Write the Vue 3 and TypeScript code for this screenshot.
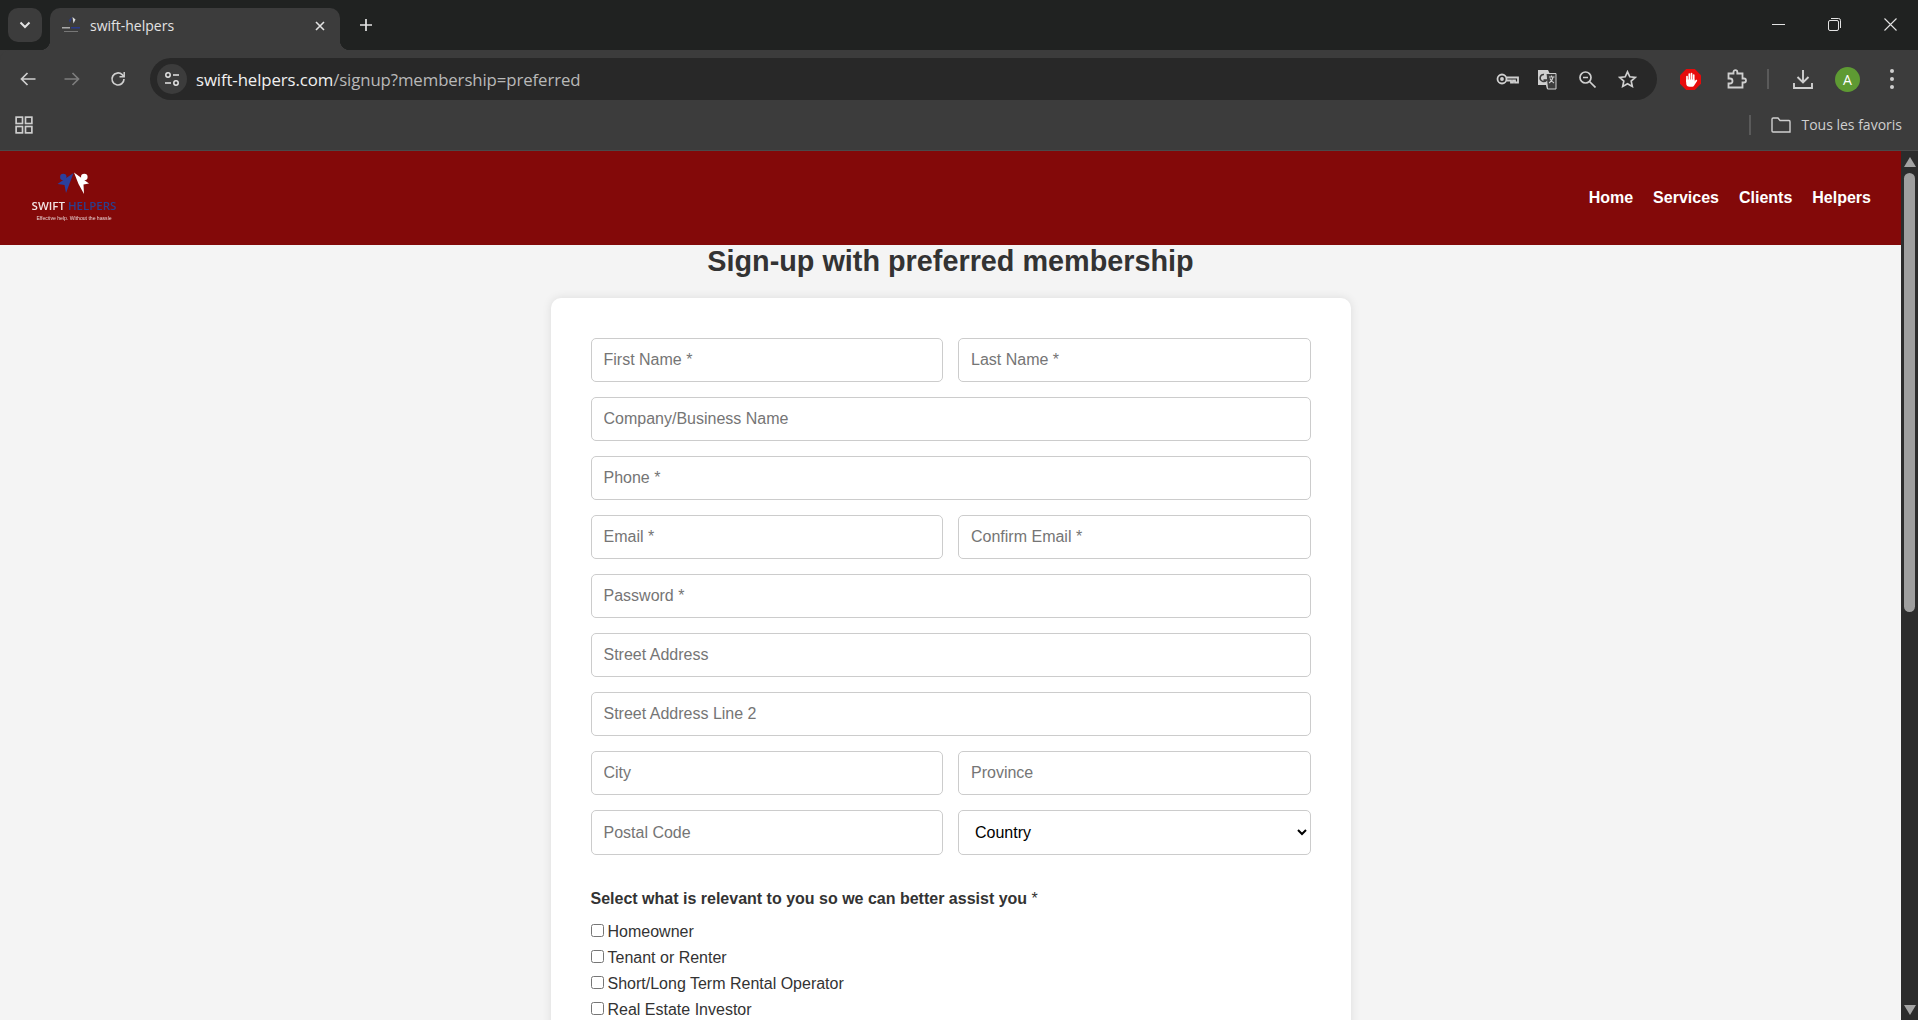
<script setup lang="ts">
type Field = { placeholder: string };

const rows: Field[][] = [
  [{ placeholder: 'First Name *' }, { placeholder: 'Last Name *' }],
  [{ placeholder: 'Company/Business Name' }],
  [{ placeholder: 'Phone *' }],
  [{ placeholder: 'Email *' }, { placeholder: 'Confirm Email *' }],
  [{ placeholder: 'Password *' }],
  [{ placeholder: 'Street Address' }],
  [{ placeholder: 'Street Address Line 2' }],
  [{ placeholder: 'City' }, { placeholder: 'Province' }],
];

const navLinks = ['Home', 'Services', 'Clients', 'Helpers'];

const relevance = [
  'Homeowner',
  'Tenant or Renter',
  'Short/Long Term Rental Operator',
  'Real Estate Investor',
];
</script>

<template>
  <div class="window">
    <!-- browser chrome -->
    <div class="tabstrip">
      <button class="tab-search" aria-label="Tabs">
        <svg width="12" height="8" viewBox="0 0 12 8"><path d="M1.5 1.5 6 6l4.500-4.500" fill="none" stroke="#e3e3e3" stroke-width="2" /></svg>
      </button>
      <div class="tab">
        <svg class="favicon" width="20" height="20" viewBox="0 0 20 20">
          <path d="M11 1 9 7 8 4Z" fill="#2a3a8a" />
          <path d="M11.500 1l3 2.500-2 4Z" fill="#ddd" />
          <rect x="1" y="11" width="8" height="1.500" fill="#aaa" />
          <rect x="10" y="11" width="9" height="1.500" fill="#2a3a8a" />
          <rect x="3" y="15" width="14" height="1" fill="#777" />
        </svg>
        <span class="tab-title">swift-helpers</span>
        <svg class="tab-close" width="10" height="10" viewBox="0 0 10 10"><path d="M1 1l8 8M9 1l-8 8" stroke="#e3e3e3" stroke-width="1.6" /></svg>
      </div>
      <svg class="new-tab" width="14" height="14" viewBox="0 0 14 14"><path d="M7 1v12M1 7h12" stroke="#e3e3e3" stroke-width="1.7" /></svg>
      <div class="window-controls">
        <svg width="13" height="13" viewBox="0 0 13 13"><path d="M0 6.500h13" stroke="#e3e3e3" /></svg>
        <svg width="13" height="13" viewBox="0 0 13 13" fill="none" stroke="#e3e3e3"><rect x=".5" y="2.500" width="10" height="10" rx="1.500" /><path d="M3 .5h7.500a2 2 0 0 1 2 2V10" /></svg>
        <svg width="13" height="13" viewBox="0 0 13 13"><path d="M.5.5l12 12M12.500.5l-12 12" stroke="#e3e3e3" stroke-width="1.100" /></svg>
      </div>
    </div>

    <div class="toolbar">
      <svg class="tb-back" width="16" height="14" viewBox="0 0 16 14" fill="none" stroke="#cfcfcf" stroke-width="1.7"><path d="M15.500 7H1.500M7.500 1l-6 6 6 6" /></svg>
      <svg class="tb-forward" width="16" height="14" viewBox="0 0 16 14" fill="none" stroke="#7d7d7d" stroke-width="1.7"><path d="M.5 7h14M8.500 1l6 6-6 6" /></svg>
      <svg class="tb-reload" width="16" height="16" viewBox="0 0 16 16" fill="none" stroke="#cfcfcf" stroke-width="1.7"><path d="M14 8a6 6 0 1 1-1.800-4.300L14 5.500" /><path d="M14.200 1v4.800H9.500" stroke-width="1.500" /></svg>
      <div class="omnibox">
        <div class="site-info">
          <svg width="16" height="16" viewBox="0 0 16 16" fill="none" stroke="#e3e3e3" stroke-width="1.500"><circle cx="4" cy="4" r="2.200" /><path d="M9 4h6M1 12h6" /><circle cx="12" cy="12" r="2.200" /></svg>
        </div>
        <span class="url"><span class="url-host">swift-helpers.com</span>/signup?membership=preferred</span>
        <div class="omni-icons">
          <svg class="key" width="23" height="12" viewBox="0 0 23 12" fill="none" stroke="#cfcfcf" stroke-width="1.800"><circle cx="6" cy="6" r="4.500" /><circle cx="6" cy="6" r="1" /><path d="M10.500 4.500h11.500v5h-3v-2h-2v2h-2v-2h-4.500" /></svg>
          <svg width="20" height="21" viewBox="0 0 20 21"><path d="M1 1h10l1.500 3H19v16h-9l-1-4H1Z" fill="#cfcfcf" /><path d="M9 4.500h10V20h-8.500Z" fill="#3c3c3c" stroke="#cfcfcf" /><path d="M7 5.500a3.500 3.500 0 1 0 2.500 5.500H6.500" fill="none" stroke="#3c3c3c" stroke-width="1.500" /><path d="M12 8h5.500M14.500 6.500V8M16 8c-.500 3-2 5-4 6M13 9.500c.800 2 2.200 3.500 4 4.500" fill="none" stroke="#cfcfcf" stroke-width="1.100" /></svg>
          <svg width="17" height="17" viewBox="0 0 17 17" fill="none" stroke="#cfcfcf" stroke-width="1.700"><circle cx="6.500" cy="6.500" r="5.500" /><path d="M10.500 10.500l6 6M4 6.500h5" /></svg>
          <svg width="19" height="18" viewBox="0 0 19 18" fill="none" stroke="#cfcfcf" stroke-width="1.700"><path d="M9.500 1.800l2.300 5 5.400.6-4 3.700 1.100 5.300-4.800-2.700-4.800 2.700 1.100-5.300-4-3.700 5.400-.6Z" /></svg>
        </div>
      </div>
      <svg class="tb-stop" width="21" height="21" viewBox="0 0 21 21">
        <path d="M6.200 0h8.600L21 6.200v8.600L14.800 21H6.200L0 14.800V6.200Z" fill="#e60b0b" />
        <path d="M7 7.500v5M9.300 5v6M11.500 4.500V11M13.700 6v6" stroke="#fff" stroke-width="1.700" stroke-linecap="round" />
        <path d="M6.200 10.500h8.300v2l1.200-1.500c.9-.8 1.900.1 1.400.9L14 16.800a2 2 0 0 1-1.700.9H9.700a3.500 3.500 0 0 1-3.500-3.500Z" fill="#fff" />
      </svg>
      <svg class="tb-puzzle" width="20" height="20" viewBox="0 0 20 20" fill="none" stroke="#cfcfcf" stroke-width="1.800"><path d="M1.500 4.500H6.500V3a1.900 1.900 0 0 1 3.800 0v1.500h5.200v5H17a2 2 0 0 1 0 4h-1.500v5H1.500v-4H3a2.400 2.400 0 0 0 0-5H1.500Z" /></svg>
      <span class="tb-sep"></span>
      <svg class="tb-download" width="20" height="20" viewBox="0 0 20 20" fill="none" stroke="#cfcfcf" stroke-width="1.900"><path d="M10 1v12M4.500 8l5.500 5.500L15.500 8M1 14v5h18v-5" /></svg>
      <div class="avatar">A</div>
      <div class="menu-dots"><i></i><i></i><i></i></div>
    </div>

    <div class="bookmarks">
      <svg width="18" height="18" viewBox="0 0 24 24" class="apps" fill="none" stroke="#cfcfcf" stroke-width="2.200"><rect x="1.500" y="1.500" width="8.500" height="8.500" /><rect x="14" y="1.500" width="8.500" height="8.500" /><rect x="1.500" y="14" width="8.500" height="8.500" /><rect x="14" y="14" width="8.500" height="8.500" /></svg>
      <span class="bm-sep"></span>
      <svg class="bm-folder" width="20" height="16" viewBox="0 0 20 16" fill="none" stroke="#cfcfcf" stroke-width="1.400"><path d="M1 14V2.200A1.200 1.200 0 0 1 2.200 1H7l2 2.500h9A1.200 1.200 0 0 1 19 4.700V15H2A1 1 0 0 1 1 14Z" /></svg>
      <span class="bm-label">Tous les favoris</span>
    </div>

    <!-- page -->
    <div class="viewport">
      <div class="page">
        <header class="site-header">
          <div class="logo">
            <svg width="40" height="25" viewBox="0 0 40 25">
              <circle cx="9.300" cy="5" r="3.200" fill="#2b3f9e" />
              <path d="M19.500 1 12 21 10.500 13 3.500 12Z" fill="#2b3f9e" />
              <circle cx="30.300" cy="5" r="3.300" fill="#fff" />
              <path d="M20 .5 35 11.500 29.500 12.500 30 22 24.500 12Z" fill="#fff" />
            </svg>
            <div class="logo-name">SWIFT <span>HELPERS</span></div>
            <div class="logo-tag">Effective help. Without the hassle</div>
          </div>
          <nav class="site-nav">
            <a v-for="link in navLinks" :key="link" href="#">{{ link }}</a>
          </nav>
        </header>

        <h1 class="title">Sign-up with preferred membership</h1>

        <form class="card" @submit.prevent>
          <div v-for="(row, i) in rows" :key="i" class="row">
            <input
              v-for="field in row"
              :key="field.placeholder"
              class="control"
              type="text"
              :placeholder="field.placeholder"
            />
          </div>
          <div class="row tall">
            <input class="control" type="text" placeholder="Postal Code" />
            <select class="control">
              <option>Country</option>
            </select>
          </div>

          <p class="group-label">Select what is relevant to you so we can better assist you <span>*</span></p>
          <label v-for="item in relevance" :key="item" class="check">
            <input type="checkbox" />{{ item }}
          </label>
        </form>
      </div>

      <div class="scrollbar">
        <span class="arrow up"></span>
        <span class="thumb"></span>
        <span class="arrow down"></span>
      </div>
    </div>
  </div>
</template>

<style>
html,
body {
  margin: 0;
  height: 100%;
  overflow: hidden;
}
</style>

<style scoped>
.window {
  width: 1918px;
  height: 1020px;
  display: flex;
  flex-direction: column;
  background: #3c3c3c;
  font-family: 'Open Sans', 'Noto Sans', sans-serif;
  overflow: hidden;
}

.tabstrip {
  height: 50px;
  flex: none;
  display: flex;
  align-items: flex-start;
  background: #202221;
  padding: 8px 0 0 8px;
  box-sizing: border-box;
}
.tab-search {
  width: 34px;
  height: 34px;
  border: 0;
  padding: 0;
  border-radius: 10px;
  background: #3c3c3c;
  display: flex;
  align-items: center;
  justify-content: center;
}
.tab {
  position: relative;
  width: 290px;
  height: 42px;
  margin-left: 8px;
  display: flex;
  align-items: center;
  background: #3c3c3c;
  border-radius: 10px 10px 0 0;
  box-sizing: border-box;
  padding: 0 15px 7px 11px;
  color: #e3e3e3;
  font-size: 14px;
}
/* concave feet where the tab meets the toolbar */
.tab::before,
.tab::after {
  content: '';
  position: absolute;
  bottom: 0;
  width: 10px;
  height: 10px;
}
.tab::before {
  left: -10px;
  background: radial-gradient(circle at 0 0, transparent 10px, #3c3c3c 10.5px);
}
.tab::after {
  right: -10px;
  background: radial-gradient(circle at 100% 0, transparent 10px, #3c3c3c 10.5px);
}
.favicon {
  flex: none;
}
.tab-title {
  flex: 1;
  margin-left: 9px;
}
.new-tab {
  margin: 10px 0 0 19px;
}
.window-controls {
  margin-left: auto;
  padding: 10px 21px 0 0;
  display: flex;
  gap: 43px;
}

.toolbar {
  height: 50px;
  flex: none;
  display: flex;
  align-items: center;
  background: #3c3c3c;
  border-radius: 10px 10px 0 0;
  box-sizing: border-box;
  padding: 8px 0 0 20px;
}
.tb-forward {
  margin-left: 28px;
}
.tb-reload {
  margin-left: 30px;
}
.omnibox {
  width: 1507px;
  height: 42px;
  margin-left: 24px;
  display: flex;
  align-items: center;
  background: #282828;
  border-radius: 21px;
  box-sizing: border-box;
  padding: 0 20px 0 7px;
}
.site-info {
  width: 30px;
  height: 30px;
  border-radius: 50%;
  background: #3c3c3c;
  display: flex;
  align-items: center;
  justify-content: center;
}
.url {
  margin-left: 9px;
  font-size: 16.8px;
  color: #b9b9b9;
  letter-spacing: -0.1px;
}
.url-host {
  color: #f0f0f0;
}
.omni-icons {
  margin-left: auto;
  display: flex;
  align-items: center;
  gap: 22px;
}
.key {
  margin-right: -4px;
}
.tb-stop {
  margin-left: 23px;
}
.tb-puzzle {
  margin-left: 26px;
}
.tb-sep {
  width: 2px;
  height: 20px;
  background: #5a5a5a;
  margin-left: 20px;
}
.tb-download {
  margin-left: 24px;
}
.avatar {
  width: 25px;
  height: 25px;
  margin-left: 22px;
  border-radius: 50%;
  background: #5e9a33;
  color: #fff;
  font-size: 14px;
  line-height: 25px;
  text-align: center;
}
.menu-dots {
  margin-left: 30px;
  display: flex;
  flex-direction: column;
  gap: 4px;
}
.menu-dots i {
  width: 4px;
  height: 4px;
  border-radius: 50%;
  background: #cfcfcf;
}

.bookmarks {
  height: 51px;
  flex: none;
  display: flex;
  align-items: center;
  box-sizing: border-box;
  padding: 0 16px 1px 15px;
  background: #3c3c3c;
  border-bottom: 1px solid #4a4a4a;
}
.bm-sep {
  width: 2px;
  height: 20px;
  background: #5a5a5a;
  margin-left: auto;
}
.bm-folder {
  margin-left: 20px;
}
.bm-label {
  margin-left: 10px;
  font-size: 14px;
  color: #cfcfcf;
}

.viewport {
  flex: 1;
  min-height: 0;
  display: flex;
  overflow: hidden;
}
.page {
  flex: 1;
  min-width: 0;
  background: #f4f4f4;
  font-family: 'Liberation Sans', Arial, sans-serif;
  color: #333;
}

.site-header {
  height: 94px;
  display: flex;
  align-items: center;
  justify-content: space-between;
  box-sizing: border-box;
  padding: 0 30px;
  background: #830909;
}
.logo {
  width: 88px;
  display: flex;
  flex-direction: column;
  align-items: center;
  padding-bottom: 2px;
  filter: blur(0.25px);
}
.logo-name {
  margin-top: 2px;
  font-size: 11.5px;
  line-height: 13px;
  white-space: nowrap;
  color: #f2e4e4;
  font-family: 'Open Sans', sans-serif;
  font-weight: 600;
}
.logo-name span {
  color: #2b3f8e;
}
.logo-tag {
  margin-top: 2px;
  font-size: 5.1px;
  line-height: 8px;
  white-space: nowrap;
  color: #e9d5d5;
}
.site-nav {
  display: flex;
  gap: 20px;
}
.site-nav a {
  color: #fff;
  font-size: 16px;
  font-weight: 700;
  text-decoration: none;
}

.title {
  margin: 0;
  font-size: 28.8px;
  line-height: 32px;
  text-align: center;
  color: #333;
}

.card {
  width: 800px;
  margin: 21px auto 0;
  box-sizing: border-box;
  padding: 40px;
  background: #fff;
  border-radius: 10px;
  box-shadow: 0 0 10px rgba(0, 0, 0, 0.1);
}
.row {
  display: flex;
  gap: 15px;
  margin-bottom: 15px;
}
.control {
  flex: 1 1 0;
  min-width: 0;
  height: 44px;
  box-sizing: border-box;
  padding: 12px;
  border: 1px solid #ccc;
  border-radius: 5px;
  background: #fff;
  font-family: inherit;
  font-size: 16px;
  color: #000;
}
.tall .control {
  height: 45px;
}
.group-label {
  margin: 35px 0 11px;
  font-size: 16px;
  line-height: 18px;
  font-weight: 700;
}
.group-label span {
  font-weight: 400;
}
.check {
  display: flex;
  align-items: center;
  height: 26px;
  font-size: 16px;
  color: #333;
}
.check input {
  width: 13px;
  height: 13px;
  margin: -4px 4px 0 0;
}

.scrollbar {
  width: 17px;
  flex: none;
  display: flex;
  flex-direction: column;
  align-items: center;
  background: #2c2c2c;
  box-sizing: border-box;
  padding: 6px 0 5px;
}
.arrow {
  width: 0;
  height: 0;
  border-left: 6.5px solid transparent;
  border-right: 6.5px solid transparent;
}
.arrow.up {
  border-bottom: 10px solid #a3a3a3;
}
.arrow.down {
  margin-top: auto;
  border-top: 10px solid #a3a3a3;
}
.thumb {
  width: 11px;
  height: 439px;
  margin-top: 6px;
  border-radius: 6px;
  background: #9f9f9f;
}
</style>
